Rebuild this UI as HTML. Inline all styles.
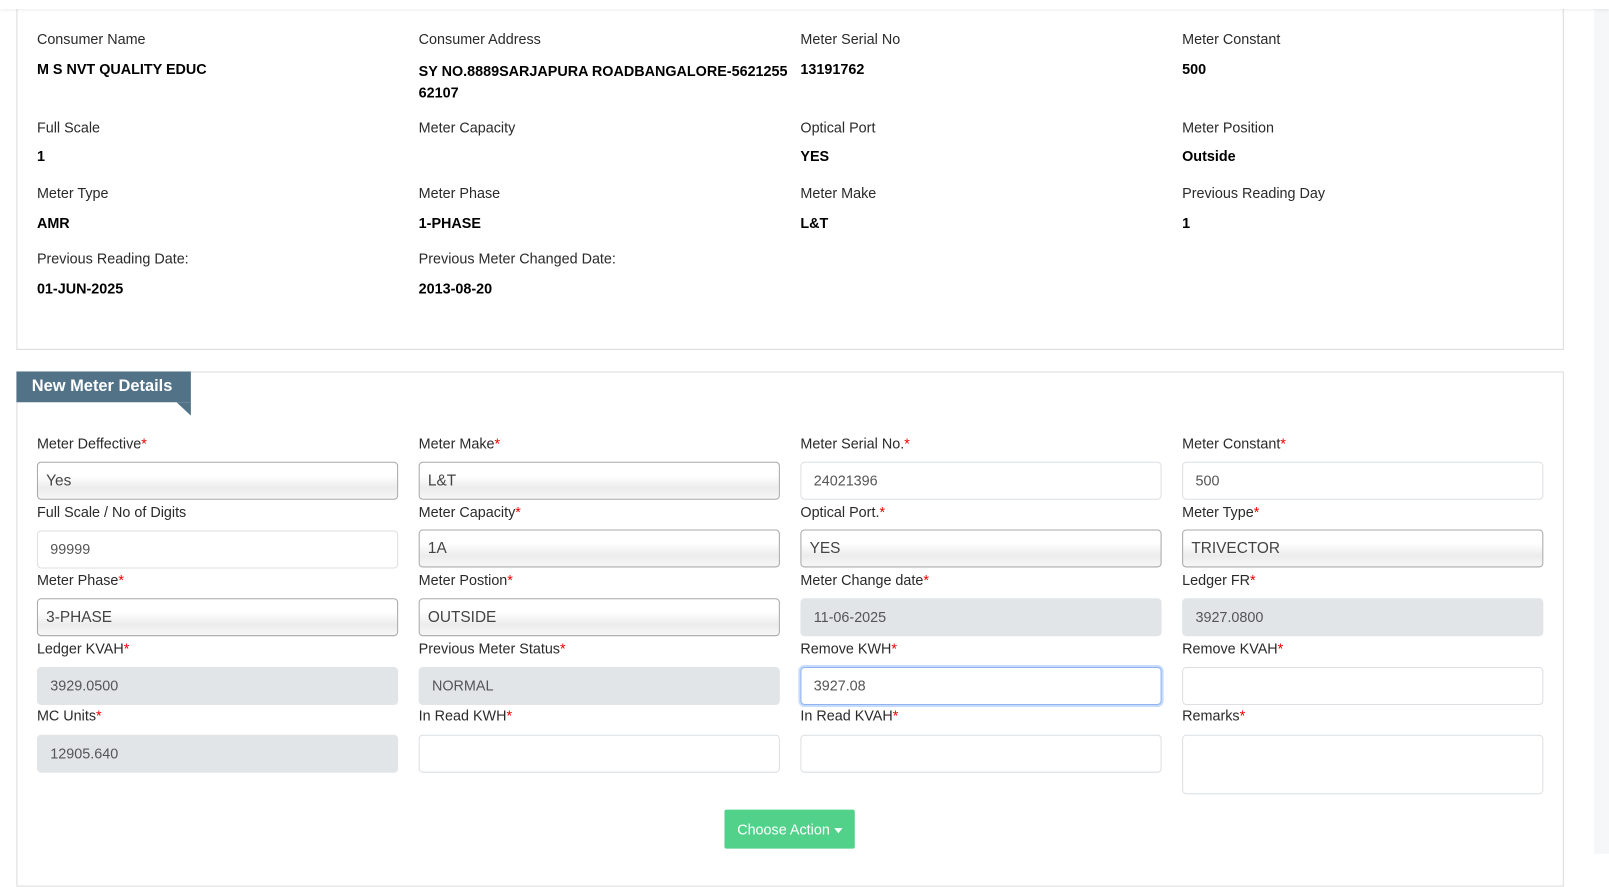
<!DOCTYPE html>
<html><head><style>
body{margin:0;width:1609px;height:854px;overflow:hidden;background:#fff;font-family:"Liberation Sans",sans-serif;font-size:14px;position:relative}
#w{position:absolute;left:0;top:0;width:1568px;height:832px;transform:scale(1.02615);transform-origin:0 0}
.a{position:absolute}
.l{position:absolute;color:#2a2a2a;font-size:14px;white-space:nowrap}
.v{position:absolute;color:#000;font-weight:bold;font-size:14px;white-space:nowrap}
.l b{color:#e00;font-weight:normal}
.i{position:absolute;width:352px;height:37px;box-sizing:border-box;border:1px solid #dcdfe3;border-radius:4px;background:#fff;color:#555;font-size:14px;line-height:35px;padding-left:12px}
.s{border:1px solid #a8a8a8;background:linear-gradient(#fff 0%,#fff 35%,#ececec 70%,#f6f6f6 100%);color:#444;padding-left:8px;font-size:15px}
.r{background:#e2e5e8;border-color:#e2e5e8;color:#555}
</style></head><body>
<div class="a" style="left:0;top:0;width:1609px;height:9px;background:#fff;box-shadow:0 1px 3px rgba(0,0,0,0.08);z-index:2"></div>
<div class="a" style="left:1594px;top:9px;width:15px;height:845px;background:#f6f7f9"></div>
<div id="w">
<div class="a" style="left:16px;top:8px;width:1506px;height:332px;border:1px solid #dcdcdc;border-top:none"></div>
<div class="a" style="left:16px;top:362px;width:1506px;height:500px;border:1px solid #dcdcdc"></div>
<div class="a" style="left:16px;top:362px;width:170px;height:30px;background:#527288;color:#fff;font-weight:bold;font-size:16px;line-height:30px;padding-left:15px;box-sizing:border-box">New Meter Details</div>
<div class="a" style="left:172px;top:392px;width:0;height:0;border-top:13px solid #527288;border-left:14px solid transparent"></div>

<div class="l" style="left:36px;top:30px">Consumer Name</div>
<div class="l" style="left:408px;top:30px">Consumer Address</div>
<div class="l" style="left:780px;top:30px">Meter Serial No</div>
<div class="l" style="left:1152px;top:30px">Meter Constant</div>
<div class="v" style="left:36px;top:59px">M S NVT QUALITY EDUC</div>
<div class="v" style="left:408px;top:59px;line-height:21px">SY NO.8889SARJAPURA ROADBANGALORE-5621255<br>62107</div>
<div class="v" style="left:780px;top:59px">13191762</div>
<div class="v" style="left:1152px;top:59px">500</div>

<div class="l" style="left:36px;top:116px">Full Scale</div>
<div class="l" style="left:408px;top:116px">Meter Capacity</div>
<div class="l" style="left:780px;top:116px">Optical Port</div>
<div class="l" style="left:1152px;top:116px">Meter Position</div>
<div class="v" style="left:36px;top:144px">1</div>
<div class="v" style="left:780px;top:144px">YES</div>
<div class="v" style="left:1152px;top:144px">Outside</div>

<div class="l" style="left:36px;top:180px">Meter Type</div>
<div class="l" style="left:408px;top:180px">Meter Phase</div>
<div class="l" style="left:780px;top:180px">Meter Make</div>
<div class="l" style="left:1152px;top:180px">Previous Reading Day</div>
<div class="v" style="left:36px;top:209px">AMR</div>
<div class="v" style="left:408px;top:209px">1-PHASE</div>
<div class="v" style="left:780px;top:209px">L&amp;T</div>
<div class="v" style="left:1152px;top:209px">1</div>

<div class="l" style="left:36px;top:244px">Previous Reading Date:</div>
<div class="l" style="left:408px;top:244px">Previous Meter Changed Date:</div>
<div class="v" style="left:36px;top:273px">01-JUN-2025</div>
<div class="v" style="left:408px;top:273px">2013-08-20</div>

<div class="l" style="left:36px;top:424px">Meter Deffective<b>*</b></div>
<div class="l" style="left:408px;top:424px">Meter Make<b>*</b></div>
<div class="l" style="left:780px;top:424px">Meter Serial No.<b>*</b></div>
<div class="l" style="left:1152px;top:424px">Meter Constant<b>*</b></div>
<div class="i s" style="left:36px;top:450px">Yes</div>
<div class="i s" style="left:408px;top:450px">L&amp;T</div>
<div class="i" style="left:780px;top:450px">24021396</div>
<div class="i" style="left:1152px;top:450px">500</div>

<div class="l" style="left:36px;top:491px">Full Scale / No of Digits</div>
<div class="l" style="left:408px;top:491px">Meter Capacity<b>*</b></div>
<div class="l" style="left:780px;top:491px">Optical Port.<b>*</b></div>
<div class="l" style="left:1152px;top:491px">Meter Type<b>*</b></div>
<div class="i" style="left:36px;top:517px">99999</div>
<div class="i s" style="left:408px;top:516px">1A</div>
<div class="i s" style="left:780px;top:516px">YES</div>
<div class="i s" style="left:1152px;top:516px">TRIVECTOR</div>

<div class="l" style="left:36px;top:557px">Meter Phase<b>*</b></div>
<div class="l" style="left:408px;top:557px">Meter Postion<b>*</b></div>
<div class="l" style="left:780px;top:557px">Meter Change date<b>*</b></div>
<div class="l" style="left:1152px;top:557px">Ledger FR<b>*</b></div>
<div class="i s" style="left:36px;top:583px">3-PHASE</div>
<div class="i s" style="left:408px;top:583px">OUTSIDE</div>
<div class="i r" style="left:780px;top:583px">11-06-2025</div>
<div class="i r" style="left:1152px;top:583px">3927.0800</div>

<div class="l" style="left:36px;top:624px">Ledger KVAH<b>*</b></div>
<div class="l" style="left:408px;top:624px">Previous Meter Status<b>*</b></div>
<div class="l" style="left:780px;top:624px">Remove KWH<b>*</b></div>
<div class="l" style="left:1152px;top:624px">Remove KVAH<b>*</b></div>
<div class="i r" style="left:36px;top:650px">3929.0500</div>
<div class="i r" style="left:408px;top:650px">NORMAL</div>
<div class="i" style="left:780px;top:650px;border-color:#8fb3ee;box-shadow:0 0 0 2px #c7dbfb">3927.08</div>
<div class="i" style="left:1152px;top:650px"></div>

<div class="l" style="left:36px;top:689px">MC Units<b>*</b></div>
<div class="l" style="left:408px;top:689px">In Read KWH<b>*</b></div>
<div class="l" style="left:780px;top:689px">In Read KVAH<b>*</b></div>
<div class="l" style="left:1152px;top:689px">Remarks<b>*</b></div>
<div class="i r" style="left:36px;top:716px">12905.640</div>
<div class="i" style="left:408px;top:716px"></div>
<div class="i" style="left:780px;top:716px"></div>
<div class="i" style="left:1152px;top:716px;height:58px"></div>

<div class="a" style="left:706px;top:789px;width:127px;height:38px;background:#51d18a;border-radius:2px;color:#fff;font-size:14px;line-height:38px;text-align:center">Choose Action <span style="display:inline-block;width:0;height:0;border-left:4px solid transparent;border-right:4px solid transparent;border-top:5px solid #fff;vertical-align:middle"></span></div>
</div>
</body></html>
